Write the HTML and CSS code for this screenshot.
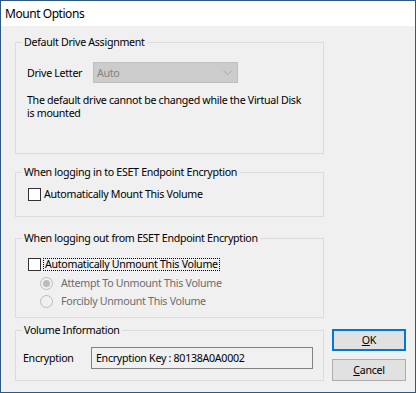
FILE: index.html
```html
<!DOCTYPE html>
<html lang="en">

<head>
    <meta charset="UTF-8">
    <title>Mount Options</title>
    <link rel="stylesheet" href="styles.css">
</head>

<body>
    <div class="window">
        <div class="titlebar">Mount Options</div>
        <div class="client">
            <div class="groups">
                <fieldset class="group group-drive">
                    <legend>Default Drive Assignment</legend>
                    <div class="field-row">
                        <span class="field-label">Drive Letter</span>
                        <div class="combo">
                            <span>Auto</span>
                            <svg class="chevron" width="9" height="5" viewBox="0 0 9 5">
                                <polyline points="0.5,0.5 4.5,4.5 8.5,0.5" fill="none" stroke="#a8a8a8" stroke-width="1"/>
                            </svg>
                        </div>
                    </div>
                    <p class="note">The default drive cannot be changed while the Virtual Disk<br>is mounted</p>
                </fieldset>

                <fieldset class="group group-login">
                    <legend>When logging in to ESET Endpoint Encryption</legend>
                    <div class="check-row">
                        <span class="checkbox"></span>
                        <span class="check-text">Automatically Mount This Volume</span>
                    </div>
                </fieldset>

                <fieldset class="group group-logout">
                    <legend>When logging out from ESET Endpoint Encryption</legend>
                    <div class="check-row">
                        <span class="checkbox"></span>
                        <span class="check-text focused">Automatically Unmount This Volume</span>
                    </div>
                    <div class="radio-row first">
                        <svg class="radio" width="13" height="13" viewBox="0 0 13 13">
                            <circle cx="6.5" cy="6.5" r="6" fill="#f0f0f0" stroke="#bcbcbc"/>
                            <circle cx="6.5" cy="6.5" r="3.5" fill="#bcbcbc"/>
                        </svg>
                        <span class="radio-text">Attempt To Unmount This Volume</span>
                    </div>
                    <div class="radio-row">
                        <svg class="radio" width="13" height="13" viewBox="0 0 13 13">
                            <circle cx="6.5" cy="6.5" r="6" fill="#f0f0f0" stroke="#bcbcbc"/>
                        </svg>
                        <span class="radio-text">Forcibly Unmount This Volume</span>
                    </div>
                </fieldset>

                <fieldset class="group group-volume">
                    <legend>Volume Information</legend>
                    <div class="field-row">
                        <span class="field-label key-label">Encryption</span>
                        <div class="key-box">Encryption Key : 80138A0A0002</div>
                    </div>
                </fieldset>
            </div>

            <div class="buttons">
                <button class="btn btn-default"><u>O</u>K</button>
                <button class="btn"><u>C</u>ancel</button>
            </div>
        </div>
    </div>
</body>

</html>
```

FILE: styles.css
```css
body {
    margin: 0;
    font-family: "Noto Sans", sans-serif;
    font-size: 10.67px;
    letter-spacing: -0.3px;
    color: #000;
}

.window {
    width: 416px;
    height: 393px;
    box-sizing: border-box;
    border: 1px solid #2b5a86;
    background: #f0f0f0;
    display: flex;
    flex-direction: column;
}

.titlebar {
    height: 25px;
    line-height: 25px;
    padding-left: 4px;
    font-size: 12px;
    letter-spacing: -0.45px;
    background: #fff;
}

.client {
    flex: 1;
    display: flex;
    gap: 8px;
    padding: 9px 9px 11px 14px;
}

.groups {
    width: 309px;
    display: flex;
    flex-direction: column;
}

.group {
    margin: 0;
    padding: 0;
    min-width: 0;
    box-sizing: border-box;
    border: 1px solid #dcdcdc;
}

.group legend {
    margin-left: 6px;
    padding: 0 2px;
    line-height: 15px;
}

.group-drive {
    height: 119px;
}

.group-login {
    height: 52px;
    margin-top: 11px;
}

.group-logout {
    height: 87px;
    margin-top: 14px;
}

.group-volume {
    height: 58px;
    margin-top: 5px;
}

.field-row {
    display: flex;
    align-items: center;
    margin-top: 12px;
}

.field-label {
    flex-shrink: 0;
    width: 66px;
    margin-left: 11px;
    white-space: nowrap;
}

.combo {
    width: 145px;
    height: 21px;
    box-sizing: border-box;
    border: 1px solid #bfbfbf;
    background: #cccccc;
    color: #838383;
    padding: 0 5px 0 3px;
    display: flex;
    align-items: center;
    justify-content: space-between;
}

.note {
    margin: 11px 0 0 11px;
    line-height: 13px;
    white-space: nowrap;
}

.check-row {
    display: flex;
    align-items: center;
    height: 13px;
    margin: 8px 0 0 12px;
}

.group-logout .check-row {
    margin-top: 12px;
}

.checkbox {
    width: 13px;
    height: 13px;
    box-sizing: border-box;
    border: 1px solid #333;
    background: #fff;
}

.check-text {
    margin-left: 3px;
    line-height: 13px;
}

.check-text.focused {
    margin-left: 2px;
    height: 13px;
    box-sizing: border-box;
    line-height: 11px;
    padding: 0 1px;
    border: 1px dotted #000;
}

.radio-row {
    display: flex;
    align-items: center;
    height: 13px;
    margin: 5px 0 0 24px;
}

.radio-row.first {
    margin-top: 6px;
}

.radio-text {
    margin-left: 8px;
    color: #6d6d6d;
    line-height: 13px;
}

.group-volume .field-row {
    margin-top: 9px;
}

.key-label {
    width: 68px;
    margin-left: 7px;
}

.key-box {
    width: 222px;
    height: 22px;
    box-sizing: border-box;
    border: 1px solid #828282;
    padding-left: 4px;
    line-height: 20px;
}

.buttons {
    width: 74px;
    display: flex;
    flex-direction: column;
    justify-content: flex-end;
    gap: 8px;
}

.btn {
    width: 74px;
    height: 22px;
    margin: 0;
    padding: 0;
    font-family: "Noto Sans", sans-serif;
    font-size: 10.67px;
    letter-spacing: -0.3px;
    color: #000;
    background: #e1e1e1;
    border: 1px solid #adadad;
}

.btn-default {
    border: 2px solid #0078d7;
}
```
